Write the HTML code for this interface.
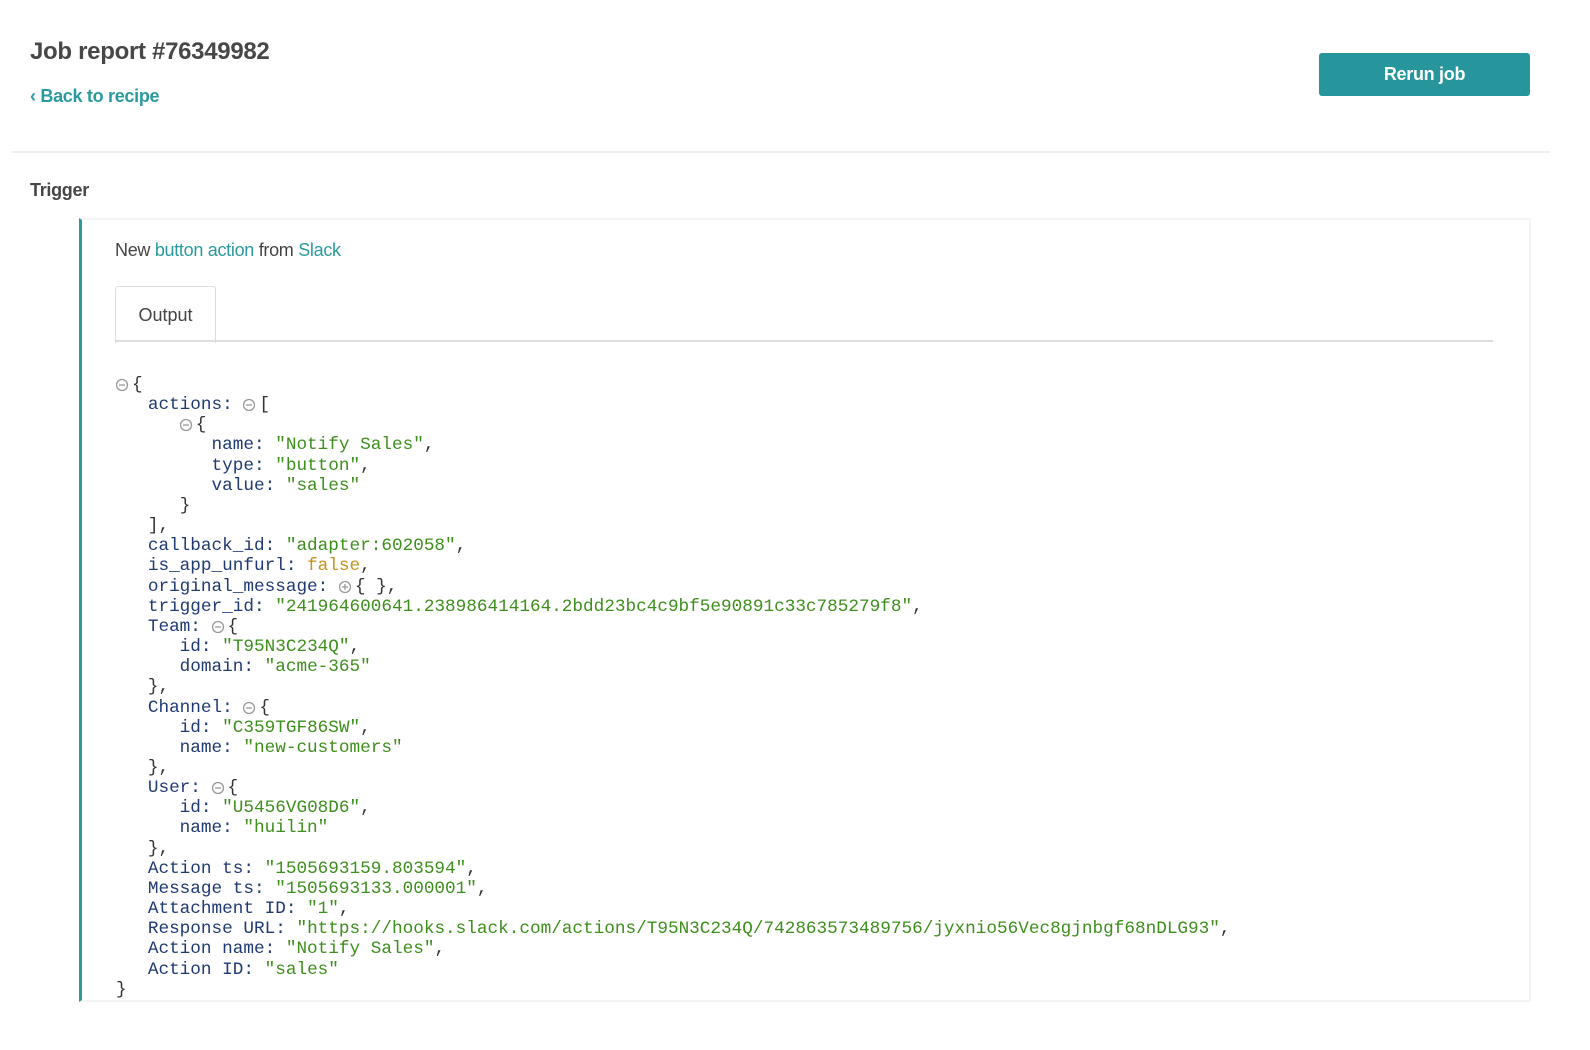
<!DOCTYPE html>
<html><head><meta charset="utf-8"><style>
body{margin:0;width:1590px;height:1050px;background:#fff;font-family:"Liberation Sans",sans-serif;color:#444;position:relative;overflow:hidden}
.a{position:absolute;white-space:nowrap}
h1{position:absolute;left:30px;top:38px;margin:0;font-size:24px;font-weight:bold;color:#474747;letter-spacing:-0.3px}
.back{left:30px;top:86px;font-size:18px;font-weight:bold;color:#2a9aa0;letter-spacing:-0.3px}
.btn{left:1319px;top:53px;width:211px;height:43px;background:#27969c;border-radius:3px;color:#fff;font-size:18px;font-weight:bold;text-align:center;line-height:43px;letter-spacing:-0.3px}
.hr{left:12px;top:151px;width:1538px;height:2px;background:#eee}
.card{left:79px;top:218px;width:1447px;height:780px;border:2px solid #f4f4f4;border-left:3px solid #2a9aa0}
pre{position:absolute;left:116px;top:375px;margin:0;font-family:"Liberation Mono",monospace;font-size:17.7px;line-height:20.15px;color:#1f3a73}
.s{color:#3d8f1c}.f{color:#c8901c}.p{color:#333}
.t{display:inline-block;width:16px;vertical-align:-2px}
</style></head><body>
<h1>Job report #76349982</h1>
<div class="a back">‹ Back to recipe</div>
<div class="a btn">Rerun job</div>
<div class="a hr"></div>
<div class="a" style="left:30px;top:180px;font-size:18px;font-weight:bold;color:#474747;letter-spacing:-0.3px">Trigger</div>
<div class="a card"></div>
<div class="a" style="left:115px;top:240px;font-size:18px;color:#444;letter-spacing:-0.3px">New <span style="color:#2a9aa0">button action</span> from <span style="color:#2a9aa0">Slack</span></div>
<div class="a" style="left:115px;top:286px;width:99px;height:56px;border:1px solid #ddd;border-bottom:none;border-radius:3px 3px 0 0;background:#fff;font-size:18px;text-align:center;line-height:56px;color:#444">Output</div>
<div class="a" style="left:115px;top:340px;width:1378px;height:2px;background:#ddd"></div>
<pre><svg class="t" width="16" height="14"><circle cx="6" cy="8" r="5.5" fill="none" stroke="#999" stroke-width="1.3"/><line x1="3" y1="8" x2="9" y2="8" stroke="#999" stroke-width="1.3"/></svg><span class="p">{</span>
   actions: <svg class="t" width="16" height="14"><circle cx="6" cy="8" r="5.5" fill="none" stroke="#999" stroke-width="1.3"/><line x1="3" y1="8" x2="9" y2="8" stroke="#999" stroke-width="1.3"/></svg><span class="p">[</span>
      <svg class="t" width="16" height="14"><circle cx="6" cy="8" r="5.5" fill="none" stroke="#999" stroke-width="1.3"/><line x1="3" y1="8" x2="9" y2="8" stroke="#999" stroke-width="1.3"/></svg><span class="p">{</span>
         name: <span class="s">"Notify Sales"</span><span class="p">,</span>
         type: <span class="s">"button"</span><span class="p">,</span>
         value: <span class="s">"sales"</span>
      <span class="p">}</span>
   <span class="p">],</span>
   callback_id: <span class="s">"adapter:602058"</span><span class="p">,</span>
   is_app_unfurl: <span class="f">false</span><span class="p">,</span>
   original_message: <svg class="t" width="16" height="14"><circle cx="6" cy="8" r="5.5" fill="none" stroke="#999" stroke-width="1.3"/><line x1="3" y1="8" x2="9" y2="8" stroke="#999" stroke-width="1.3"/><line x1="6" y1="5" x2="6" y2="11" stroke="#999" stroke-width="1.3"/></svg><span class="p">{ },</span>
   trigger_id: <span class="s">"241964600641.238986414164.2bdd23bc4c9bf5e90891c33c785279f8"</span><span class="p">,</span>
   Team: <svg class="t" width="16" height="14"><circle cx="6" cy="8" r="5.5" fill="none" stroke="#999" stroke-width="1.3"/><line x1="3" y1="8" x2="9" y2="8" stroke="#999" stroke-width="1.3"/></svg><span class="p">{</span>
      id: <span class="s">"T95N3C234Q"</span><span class="p">,</span>
      domain: <span class="s">"acme-365"</span>
   <span class="p">},</span>
   Channel: <svg class="t" width="16" height="14"><circle cx="6" cy="8" r="5.5" fill="none" stroke="#999" stroke-width="1.3"/><line x1="3" y1="8" x2="9" y2="8" stroke="#999" stroke-width="1.3"/></svg><span class="p">{</span>
      id: <span class="s">"C359TGF86SW"</span><span class="p">,</span>
      name: <span class="s">"new-customers"</span>
   <span class="p">},</span>
   User: <svg class="t" width="16" height="14"><circle cx="6" cy="8" r="5.5" fill="none" stroke="#999" stroke-width="1.3"/><line x1="3" y1="8" x2="9" y2="8" stroke="#999" stroke-width="1.3"/></svg><span class="p">{</span>
      id: <span class="s">"U5456VG08D6"</span><span class="p">,</span>
      name: <span class="s">"huilin"</span>
   <span class="p">},</span>
   Action ts: <span class="s">"1505693159.803594"</span><span class="p">,</span>
   Message ts: <span class="s">"1505693133.000001"</span><span class="p">,</span>
   Attachment ID: <span class="s">"1"</span><span class="p">,</span>
   Response URL: <span class="s">"https://hooks.slack.com/actions/T95N3C234Q/742863573489756/jyxnio56Vec8gjnbgf68nDLG93"</span><span class="p">,</span>
   Action name: <span class="s">"Notify Sales"</span><span class="p">,</span>
   Action ID: <span class="s">"sales"</span>
<span class="p">}</span></pre>
</body></html>
